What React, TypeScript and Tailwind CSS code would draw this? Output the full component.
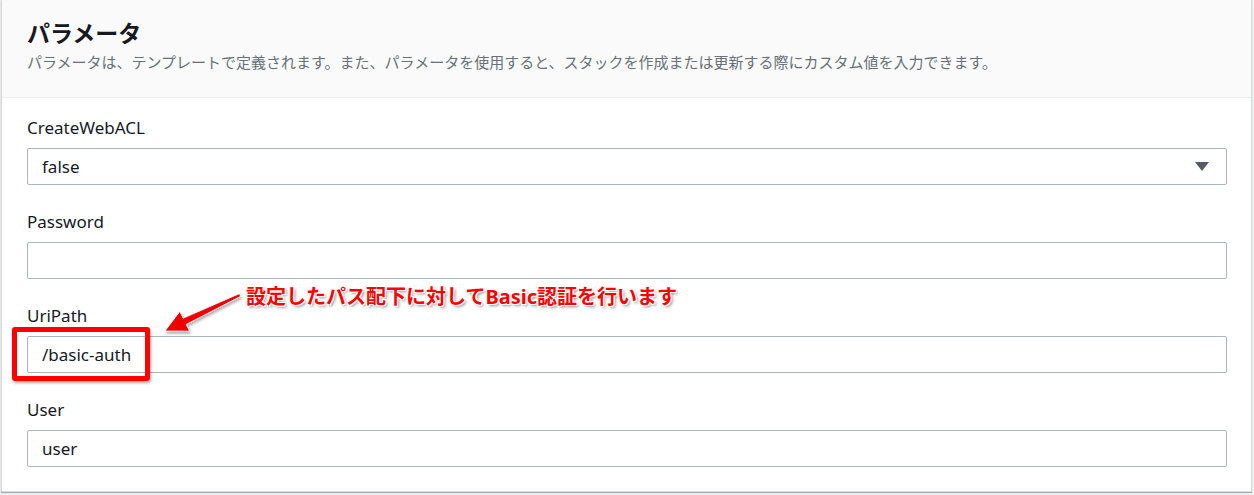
import React from 'react';

const font = "font-['Noto_Sans','Noto_Sans_CJK_JP',sans-serif]";

type FieldProps = {
  label: string;
  value?: string;
  select?: boolean;
};

const Field: React.FC<FieldProps> = ({ label, value, select }) => (
  <div className="flex flex-col">
    <label className="h-[22px] text-[17px] leading-[22px] text-[#16191f]">{label}</label>
    <div className="mt-[9px] flex h-[37px] items-center justify-between rounded-[2px] border border-[#aab7b8] bg-white pl-[14px] pr-[17px]">
      <span className="text-[17px] leading-[24px] text-[#16191f]">{value}</span>
      {select && (
        <svg width="14" height="10" viewBox="0 0 14 10">
          <polygon points="0,0 14,0 7,9" fill="#545b64" />
        </svg>
      )}
    </div>
  </div>
);

const App: React.FC = () => {
  return (
    <div className={`relative h-[495px] w-full bg-[#f2f3f3] pl-px ${font}`}>
      <div className="w-[1251px] border border-t-0 border-[#d5dbdb] bg-white shadow-[0_1px_1px_rgba(0,28,36,0.3)]">
        <div className="h-[98px] border-b border-[#eaeded] bg-[#fafafa] px-[25px] pt-[18px]">
          <h2 className="text-[23px] font-bold leading-[30px] text-[#16191f]">パラメータ</h2>
          <p className="mt-[4px] text-[15px] leading-[20px] text-[#687078]">
            パラメータは、テンプレートで定義されます。また、パラメータを使用すると、スタックを作成または更新する際にカスタム値を入力できます。
          </p>
        </div>
        <div className="flex flex-col gap-[26px] pl-[25px] pr-[24px] pb-[24px] pt-[19px]">
          <Field label="CreateWebACL" value="false" select />
          <Field label="Password" />
          <Field label="UriPath" value="/basic-auth" />
          <Field label="User" value="user" />
        </div>
      </div>

      {/* annotation overlay */}
      <div className="absolute left-[12px] top-[327px] h-[54px] w-[138px] rounded-[3px] border-[5px] border-[#ff0000] shadow-[1px_2px_3px_rgba(0,0,0,0.35)]" />
      <svg className="absolute left-0 top-0" width="260" height="345" viewBox="0 0 260 345">
        <defs>
          <filter id="sh" x="-20%" y="-20%" width="140%" height="140%">
            <feDropShadow dx="1" dy="2" stdDeviation="1.5" floodColor="#000" floodOpacity="0.35" />
          </filter>
        </defs>
        <polygon
          points="165,331 179.8,311.4 183.2,318.2 239.3,293.7 240.7,296.3 186.2,324.4 189.6,331.2"
          fill="#f00000"
          stroke="#ffffff"
          strokeWidth="0.8"
          filter="url(#sh)"
        />
      </svg>
      <div className="absolute left-[246px] top-[283px] text-[20px] font-bold leading-[28px] text-[#ff0000] [text-shadow:1px_1px_0_#fff,-1px_-1px_0_#fff,1px_-1px_0_#fff,-1px_1px_0_#fff,2px_2px_3px_rgba(0,0,0,0.45)]">
        設定したパス配下に対してBasic認証を行います
      </div>
    </div>
  );
};

export default App;
